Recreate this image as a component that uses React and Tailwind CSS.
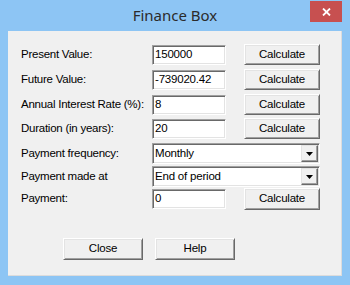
import React from 'react';

const font = { fontFamily: '"Liberation Sans", Arial, sans-serif' };

const TextBox = ({ value }) => (
  <div className="w-[74px] h-[20px] bg-white border border-t-[#a0a0a0] border-l-[#a0a0a0] border-r-white border-b-white shadow-[inset_1px_1px_0_#696969,inset_-1px_-1px_0_#e3e3e3] flex items-center pl-[2px] text-[11.5px] tracking-[-0.2px] text-black">
    {value}
  </div>
);

const Button = ({ label, w = 'w-[76px]', h = 'h-[21px]' }) => (
  <div className={`${w} ${h} bg-[#f0f0f0] border border-t-white border-l-white border-r-[#696969] border-b-[#696969] shadow-[inset_1px_1px_0_#e3e3e3,inset_-1px_-1px_0_#a0a0a0] flex items-center justify-center text-[11.5px] tracking-[-0.2px] text-black`}>
    {label}
  </div>
);

const Combo = ({ value }) => (
  <div className="w-[168px] h-[21px] bg-white border border-t-[#a0a0a0] border-l-[#a0a0a0] border-r-white border-b-white shadow-[inset_1px_1px_0_#696969,inset_-1px_-1px_0_#e3e3e3] flex items-center text-[11.5px] tracking-[-0.2px] text-black">
    <span className="flex-1 pl-[2px]">{value}</span>
    <div className="w-[17px] h-[17px] mr-[1px] bg-[#f0f0f0] border border-t-[#e3e3e3] border-l-[#e3e3e3] border-r-[#696969] border-b-[#696969] shadow-[inset_-1px_-1px_0_#a0a0a0] flex items-center justify-center">
      <svg width="7" height="4" viewBox="0 0 7 4">
        <polygon points="0,0 7,0 3.5,4" fill="#000" />
      </svg>
    </div>
  </div>
);

const Row = ({ label, children, className = '' }) => (
  <div className={`flex items-center h-[21px] ${className}`}>
    <div className="w-[131px] whitespace-nowrap text-[11.5px] tracking-[-0.25px] text-black leading-none">{label}</div>
    {children}
  </div>
);

export default function App() {
  return (
    <div className="w-[350px] h-[285px] bg-[#8dc5f4] flex flex-col" style={font}>
      {/* Title bar */}
      <div className="h-[31px] grid grid-cols-[1fr_auto_1fr]">
        <div />
        <div className="flex items-center justify-center text-[15px] text-[#2b2b2b]" style={{ fontFamily: '"Noto Sans", "Open Sans", sans-serif' }}>
          Finance Box
        </div>
        <div className="flex justify-end items-start pt-[1px] pr-[8px]">
          <div className="w-[32px] h-[21px] bg-[#c75050] flex items-center justify-center">
            <svg width="9" height="8" viewBox="0 0 9 8">
              <path d="M1 0.5 L8 7.5 M8 0.5 L1 7.5" stroke="#fff" strokeWidth="1.8" />
            </svg>
          </div>
        </div>
      </div>

      {/* Client */}
      <div className="mx-[8px] h-[245px] bg-[#f0f0f0] border-r border-b border-[#dcdcdc] flex flex-col pl-[13px] pt-[13px]">
        <Row label="Present Value:">
          <TextBox value="150000" />
          <div className="ml-[18px]"><Button label="Calculate" /></div>
        </Row>
        <Row label="Future Value:" className="mt-[4px]">
          <TextBox value="-739020.42" />
          <div className="ml-[18px]"><Button label="Calculate" /></div>
        </Row>
        <Row label="Annual Interest Rate (%):" className="mt-[4px]">
          <TextBox value="8" />
          <div className="ml-[18px]"><Button label="Calculate" /></div>
        </Row>
        <Row label="Duration (in years):" className="mt-[3px]">
          <TextBox value="20" />
          <div className="ml-[18px]"><Button label="Calculate" /></div>
        </Row>
        <Row label="Payment frequency:" className="mt-[4px]">
          <Combo value="Monthly" />
        </Row>
        <Row label="Payment made at" className="mt-[2px]">
          <Combo value="End of period" />
        </Row>
        <Row label="Payment:" className="mt-[1px]">
          <TextBox value="0" />
          <div className="ml-[18px]"><Button label="Calculate" h="h-[22px]" /></div>
        </Row>

        <div className="flex gap-[12px] pl-[42px] mt-[29px]">
          <Button label="Close" w="w-[80px]" h="h-[22px]" />
          <Button label="Help" w="w-[80px]" h="h-[22px]" />
        </div>
      </div>
    </div>
  );
}
